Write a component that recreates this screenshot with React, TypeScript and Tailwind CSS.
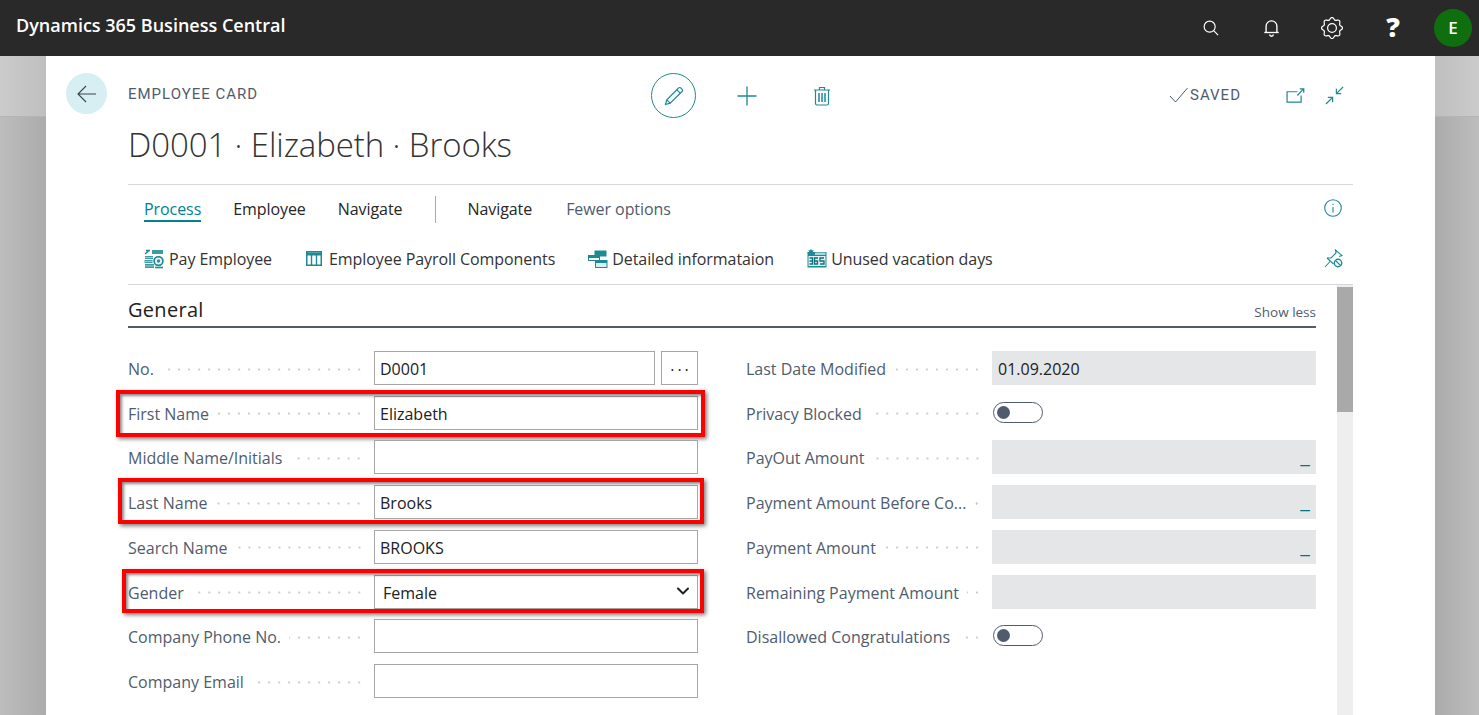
import React from 'react';
import { ChevronDown } from 'lucide-react';

const TEAL = '#1d8a94';

// scalloped outline for the settings gear
function gearPath() {
  const points: string[] = [];
  for (let i = 0; i < 96; i++) {
    const a = (i / 96) * Math.PI * 2;
    const r = 9.4 + 1.1 * Math.cos(a * 8);
    points.push(`${(11 + r * Math.cos(a)).toFixed(2)} ${(11 + r * Math.sin(a)).toFixed(2)}`);
  }
  return `M${points.join(' L')} Z`;
}

function HeaderIcons() {
  return (
    <div className="flex items-center text-white">
      <div className="flex w-[61px] justify-center">
        <svg width="16" height="16" viewBox="0 0 18 18" fill="none" stroke="currentColor" strokeWidth="1.3">
          <circle cx="7.5" cy="7.5" r="6.2" />
          <path d="M12 12 L17 17" />
        </svg>
      </div>
      <div className="flex w-[61px] justify-center">
        <svg width="17" height="18" viewBox="0 0 18 20" fill="none" stroke="currentColor" strokeWidth="1.5">
          <path d="M3 14.5 V8 a6 6 0 0 1 12 0 V14.5" />
          <path d="M1 15 H17" />
          <path d="M7 17.2 a2 2 0 0 0 4 0" />
        </svg>
      </div>
      <div className="flex w-[60px] justify-center">
        <svg width="22" height="22" viewBox="0 0 22 22" fill="none" stroke="currentColor" strokeWidth="1.2">
          <circle cx="11" cy="11" r="4.4" />
          <path d={gearPath()} />
        </svg>
      </div>
      <div className="mb-[3px] flex w-[62px] justify-center">
        <span className="text-[27px] font-extrabold leading-none">?</span>
      </div>
      <div className="ml-[10px] mb-[1px] flex h-[38px] w-[38px] items-center justify-center rounded-full bg-[#0f6f0f] text-[17px] font-semibold">E</div>
    </div>
  );
}

function PayIcon() {
  return (
    <svg width="20" height="20" viewBox="0 0 20 20" className="shrink-0">
      <path d="M8 1 h11 v4 h-11 Z" fill="#3f9aa4" />
      <path d="M1 5 l4-3.5 M2 1.5 h4" stroke={TEAL} strokeWidth="1.4" fill="none" />
      <path d="M1 7 h8 v3 h-8 Z M0.5 11 h8 v3 h-8 Z M1 15 h9 v4 h-9 Z" fill="#3f9aa4" />
      <path d="M1 8.5 h8 M0.5 12.5 h8 M1 17 h9" stroke="#c7e4e8" strokeWidth="0.7" />
      <circle cx="14.5" cy="12" r="4.4" fill="#eaf6f7" stroke={TEAL} strokeWidth="1.7" />
      <circle cx="14.5" cy="12" r="1.7" fill="#2f8f9a" />
      <path d="M11 18.5 h8" stroke={TEAL} strokeWidth="1.6" />
    </svg>
  );
}

function ColumnsIcon() {
  return (
    <svg width="16" height="15" viewBox="0 0 16 15" className="shrink-0">
      <rect x="0.75" y="0.75" width="14.5" height="13.5" fill="#fff" stroke={TEAL} strokeWidth="1.5" />
      <path d="M0 3 H16" stroke={TEAL} strokeWidth="3" />
      <path d="M5.5 3 V14 M10.5 3 V14" stroke={TEAL} strokeWidth="1.4" />
    </svg>
  );
}

function DetailIcon() {
  return (
    <svg width="20" height="18" viewBox="0 0 20 18" className="shrink-0">
      <rect x="6.5" y="0.5" width="12" height="6" fill="#1d8a94" />
      <rect x="0.5" y="5.5" width="11" height="5" fill="#fff" stroke={TEAL} />
      <path d="M0.5 7 H11.5" stroke={TEAL} strokeWidth="2" />
      <rect x="7.5" y="10.5" width="11.5" height="7" fill="#d7eef2" stroke={TEAL} />
      <path d="M7.5 12 H19" stroke={TEAL} strokeWidth="2" />
    </svg>
  );
}

function VacationIcon() {
  return (
    <svg width="20" height="19" viewBox="0 0 20 19" className="shrink-0">
      <rect x="0.5" y="3" width="19" height="15.5" fill="#1d8a94" />
      <rect x="8" y="3.5" width="10.5" height="2.5" fill="#a8d5da" />
      <rect x="1.5" y="7" width="17" height="10" fill="#e3f2f4" />
      <circle cx="4" cy="3.5" r="2.4" fill="#1d8a94" />
      <path d="M4 0 V7 M0.5 3.5 H7.5 M1.5 1 L6.5 6 M6.5 1 L1.5 6" stroke={TEAL} strokeWidth="0.8" />
      <path d="M2.5 9 h3 v6 h-3 M2.5 12 h3 M11 9 h-3.5 v6 h3 v-3 h-3 M17 9 h-4 v3 h4 v3 h-4" stroke="#0f6f78" strokeWidth="1.3" fill="none" />
    </svg>
  );
}

function Field({
  label,
  children,
  box,
}: {
  label: string;
  children: React.ReactNode;
  box?: string;
}) {
  return (
    <div className="relative flex h-[34px] items-center">
      <div className="flex w-[233px] items-center pt-[2px]">
        <span className="whitespace-nowrap text-[#505c6d]">{label}</span>
        <span className="ml-2 h-[3px] flex-1 bg-[radial-gradient(circle,#c8cbcf_1px,transparent_1.2px)] bg-[length:10px_3px] bg-[position:right_-3px_center] bg-repeat-x" />
      </div>
      <div className="ml-[13px] flex h-full w-[324px]">{children}</div>
      {box && (
        <div className={`pointer-events-none absolute border-[4px] border-[#ff0000] shadow-[2px_2px_4px_rgba(0,0,0,0.5),inset_2px_2px_3px_rgba(0,0,0,0.45)] ${box}`} />
      )}
    </div>
  );
}

function TextBox({ value }: { value?: string }) {
  return (
    <div className="flex h-full flex-1 items-center border border-[#a6a6a6] bg-white pl-[5px] pt-[2px] text-[#212121]">
      {value}
    </div>
  );
}

function ReadOnly({ value, dash }: { value?: string; dash?: boolean }) {
  return (
    <div className="flex h-full flex-1 items-center justify-between bg-[#e5e6e8] px-[6px] pt-[2px] text-[#212121]">
      <span>{value}</span>
      {dash && <span className="mb-[8px] text-[22px] leading-none text-[#00767f]">_</span>}
    </div>
  );
}

function Toggle() {
  return (
    <div className="ml-px mt-[6px] flex h-[21px] w-[50px] items-center rounded-full border border-[#505c6d] bg-white pl-[3px]">
      <div className="h-[13px] w-[13px] rounded-full bg-[#505c6d]" />
    </div>
  );
}

function LeftGutter() {
  return (
    <div className="flex w-[46px] shrink-0 flex-col">
      <div className="h-[61px] border-b border-[#b4b4b4] bg-gradient-to-r from-[#cbcbcb] to-[#bfbfbf]" />
      <div className="flex-1 bg-gradient-to-r from-[#bdbdbd] to-[#ababab]" />
    </div>
  );
}

function RightGutter() {
  return (
    <div className="flex w-[44px] shrink-0 flex-col">
      <div className="h-[61px] border-b border-[#b4b4b4] bg-gradient-to-r from-[#bfbfbf] to-[#cbcbcb]" />
      <div className="flex-1 bg-gradient-to-r from-[#ababab] to-[#bdbdbd]" />
    </div>
  );
}

export default function App() {
  return (
    <div className="flex h-[715px] flex-col overflow-hidden bg-white font-['Open_Sans',sans-serif] text-base">
      <header className="flex h-14 shrink-0 items-center justify-between bg-[#292929] pl-4 pr-[7px]">
        <span className="pb-[6px] text-[18px] font-semibold text-white">Dynamics 365 Business Central</span>
        <HeaderIcons />
      </header>

      <div className="flex min-h-0 flex-1">
        <LeftGutter />

        <div className="flex min-w-0 flex-1 bg-white">
          {/* back button column */}
          <div className="w-[82px] shrink-0 pl-5 pt-[17px]">
            <div className="flex h-[41px] w-[41px] items-center justify-center rounded-full bg-[#d7eef2]">
              <svg width="20" height="18" viewBox="0 0 20 18" fill="none" stroke="#3a4450" strokeWidth="1.1">
                <path d="M19 9 H1 M9 1 L1 9 L9 17" />
              </svg>
            </div>
          </div>

          <div className="flex min-w-0 flex-1 flex-col">
            <div className="flex h-[80px] shrink-0 items-start pt-[17px]">
              <div className="flex h-[42px] w-[523px] items-center pt-px font-['Roboto',sans-serif] text-[15px] font-normal tracking-[1px] text-[#505c6d]">
                EMPLOYEE CARD
              </div>
              <div className="flex h-[45px] w-[45px] items-center justify-center rounded-full border-[1.5px] border-[#1d8a94]">
                <svg width="20" height="20" viewBox="0 0 20 20" fill="none" stroke={TEAL} strokeWidth="1.2">
                  <path d="M1.5 18.5 L2.8 13.8 L14.5 2 A1.6 1.6 0 0 1 17 2.2 L17.8 3 A1.6 1.6 0 0 1 18 5.5 L6.2 17.2 Z" />
                  <path d="M2.8 13.8 L6.2 17.2 M12.8 3.8 L16.2 7.2" />
                </svg>
              </div>
              <div className="ml-[41px] mt-[13px]">
                <svg width="20" height="20" viewBox="0 0 20 20" stroke={TEAL} strokeWidth="1.3">
                  <path d="M0.5 10 H19.5 M10 0.5 V19.5" />
                </svg>
              </div>
              <div className="ml-[56px] mt-[13px]">
                <svg width="18" height="20" viewBox="0 0 18 20" fill="none" stroke={TEAL} strokeWidth="1.2">
                  <path d="M1 4 H17 M6.5 4 V1.5 H11.5 V4" />
                  <path d="M2.5 4 V17.5 Q2.5 19 4 19 H14 Q15.5 19 15.5 17.5 V4" />
                  <path d="M6 7 V16 M9 7 V16 M12 7 V16" strokeWidth="1.5" />
                </svg>
              </div>
              <div className="ml-[338px] mt-[11px] flex items-center">
                <svg width="19" height="16" viewBox="0 0 19 16" fill="none" stroke="#505c6d" strokeWidth="1">
                  <path d="M1 9 L6.5 15 L18.5 1" />
                </svg>
                <span className="ml-[2px] font-['Roboto',sans-serif] text-[15px] font-normal tracking-[1px] text-[#505c6d]">SAVED</span>
              </div>
              <div className="ml-[45px] mt-[15px]">
                <svg width="19" height="15" viewBox="0 0 20 16" fill="none" stroke={TEAL} strokeWidth="1.3">
                  <path d="M12 4 H1 V15 H16 V8" />
                  <path d="M12 8 L18 1.5 M14.5 1 H18.8 V5" />
                </svg>
              </div>
              <div className="ml-[20px] mt-[13px]">
                <svg width="19" height="19" viewBox="0 0 20 20" fill="none" stroke={TEAL} strokeWidth="1.3">
                  <path d="M12 8 L19 1 M12 3 V8 H17" />
                  <path d="M8 12 L1 19 M3 12 H8 V17" />
                </svg>
              </div>
            </div>

            <h1 className="h-[48px] shrink-0 text-[33px] font-light leading-[18px] tracking-[-0.1px] text-[#333333]">
              D0001 · Elizabeth · Brooks
            </h1>

            {/* action bar */}
            <div className="h-[101px] shrink-0 border-y border-[#d5d8dc] tracking-[-0.07px]">
              <div className="flex h-[48px] items-center pl-4 pr-[11px]">
                <span className="flex h-[26px] items-center border-b-2 border-[#00838f] pt-px text-[#00838f]">Process</span>
                <span className="ml-[32px] text-[#262626]">Employee</span>
                <span className="ml-[32px] text-[#262626]">Navigate</span>
                <span className="ml-[33px] h-[27px] w-px bg-[#a6abb3]" />
                <span className="ml-[31px] text-[#262626]">Navigate</span>
                <span className="ml-[34px] text-[#505c6d]">Fewer options</span>
                <svg width="18" height="18" viewBox="0 0 18 18" fill="none" stroke={TEAL} strokeWidth="1.1" className="mb-[2px] ml-auto">
                  <circle cx="9" cy="9" r="8.3" />
                  <path d="M9 8 V13.5 M9 4.8 V6" />
                </svg>
              </div>
              <div className="flex h-[51px] items-center pl-4 pr-[10px] text-[#333333]">
                <span className="flex items-center gap-[5px]"><PayIcon />Pay Employee</span>
                <span className="ml-[34px] flex items-center gap-[7px]"><ColumnsIcon />Employee Payroll Components</span>
                <span className="ml-[33px] flex items-center gap-[4px]"><DetailIcon />Detailed informataion</span>
                <span className="ml-[33px] flex items-center gap-[4px]"><VacationIcon />Unused vacation days</span>
                <svg width="19" height="19" viewBox="0 0 19 19" fill="none" stroke={TEAL} strokeWidth="1.1" className="ml-auto">
                  <path d="M1 18 L6 12.5 M3 9 L7 9 L12 4 L11.5 1 L18 6.5 L15 7.5" />
                  <path d="M3 9 L9.5 15" />
                  <circle cx="14" cy="14" r="3.7" strokeWidth="1.4" />
                  <path d="M11.5 11.5 L16.5 16.5" />
                </svg>
              </div>
            </div>

            {/* scrolling content */}
            <div className="flex min-h-0 flex-1">
              <div className="w-[1188px] shrink-0">
                <div className="flex h-[43px] items-end justify-between border-b-2 border-[#505c6d] pb-[3px]">
                  <span className="text-[20px] font-medium leading-[26px] tracking-[0.3px] text-[#212121]">General</span>
                  <span className="text-[13.5px] leading-[22px] text-[#505c6d]">Show less</span>
                </div>
                <div className="grid grid-cols-[570px_570px] gap-x-12 pt-[23.05px]">
                  <div className="flex flex-col gap-y-[10.72px]">
                    <Field label="No.">
                      <TextBox value="D0001" />
                      <div className="ml-[6px] flex h-full w-[37px] items-center justify-center border border-[#a6a6a6] bg-white pb-[7px] pl-[3px] font-medium tracking-[3px] text-[#212121]">...</div>
                    </Field>
                    <Field label="First Name" box="-left-[12px] -right-[7px] -top-[6px] -bottom-[7px]">
                      <TextBox value="Elizabeth" />
                    </Field>
                    <Field label="Middle Name/Initials">
                      <TextBox />
                    </Field>
                    <Field label="Last Name" box="-left-[10px] -right-[6px] -top-[7px] -bottom-[5px]">
                      <TextBox value="Brooks" />
                    </Field>
                    <Field label="Search Name">
                      <TextBox value="BROOKS" />
                    </Field>
                    <Field label="Gender" box="-left-[6px] -right-[6px] -top-[6px] -bottom-[4px]">
                      <div className="flex h-full flex-1 items-center justify-between border border-[#a6a6a6] bg-white pl-2 pr-1 pt-[2px] text-[#212121]">
                        Female
                        <ChevronDown size={20} strokeWidth={2.4} className="mb-[3px] text-[#212121]" />
                      </div>
                    </Field>
                    <Field label="Company Phone No.">
                      <TextBox />
                    </Field>
                    <Field label="Company Email">
                      <TextBox />
                    </Field>
                  </div>
                  <div className="flex flex-col gap-y-[10.72px]">
                    <Field label="Last Date Modified">
                      <ReadOnly value="01.09.2020" />
                    </Field>
                    <Field label="Privacy Blocked">
                      <Toggle />
                    </Field>
                    <Field label="PayOut Amount">
                      <ReadOnly dash />
                    </Field>
                    <Field label="Payment Amount Before Co...">
                      <ReadOnly dash />
                    </Field>
                    <Field label="Payment Amount">
                      <ReadOnly dash />
                    </Field>
                    <Field label="Remaining Payment Amount">
                      <ReadOnly />
                    </Field>
                    <Field label="Disallowed Congratulations">
                      <Toggle />
                    </Field>
                  </div>
                </div>
              </div>
              <div className="ml-[21px] flex w-4 flex-col bg-[#eeeeee] pt-[2px]">
                <div className="h-[125px] bg-[#a9a9a9]" />
              </div>
            </div>
          </div>

          <div className="w-[82px] shrink-0" />
        </div>

        <RightGutter />
      </div>
    </div>
  );
}
